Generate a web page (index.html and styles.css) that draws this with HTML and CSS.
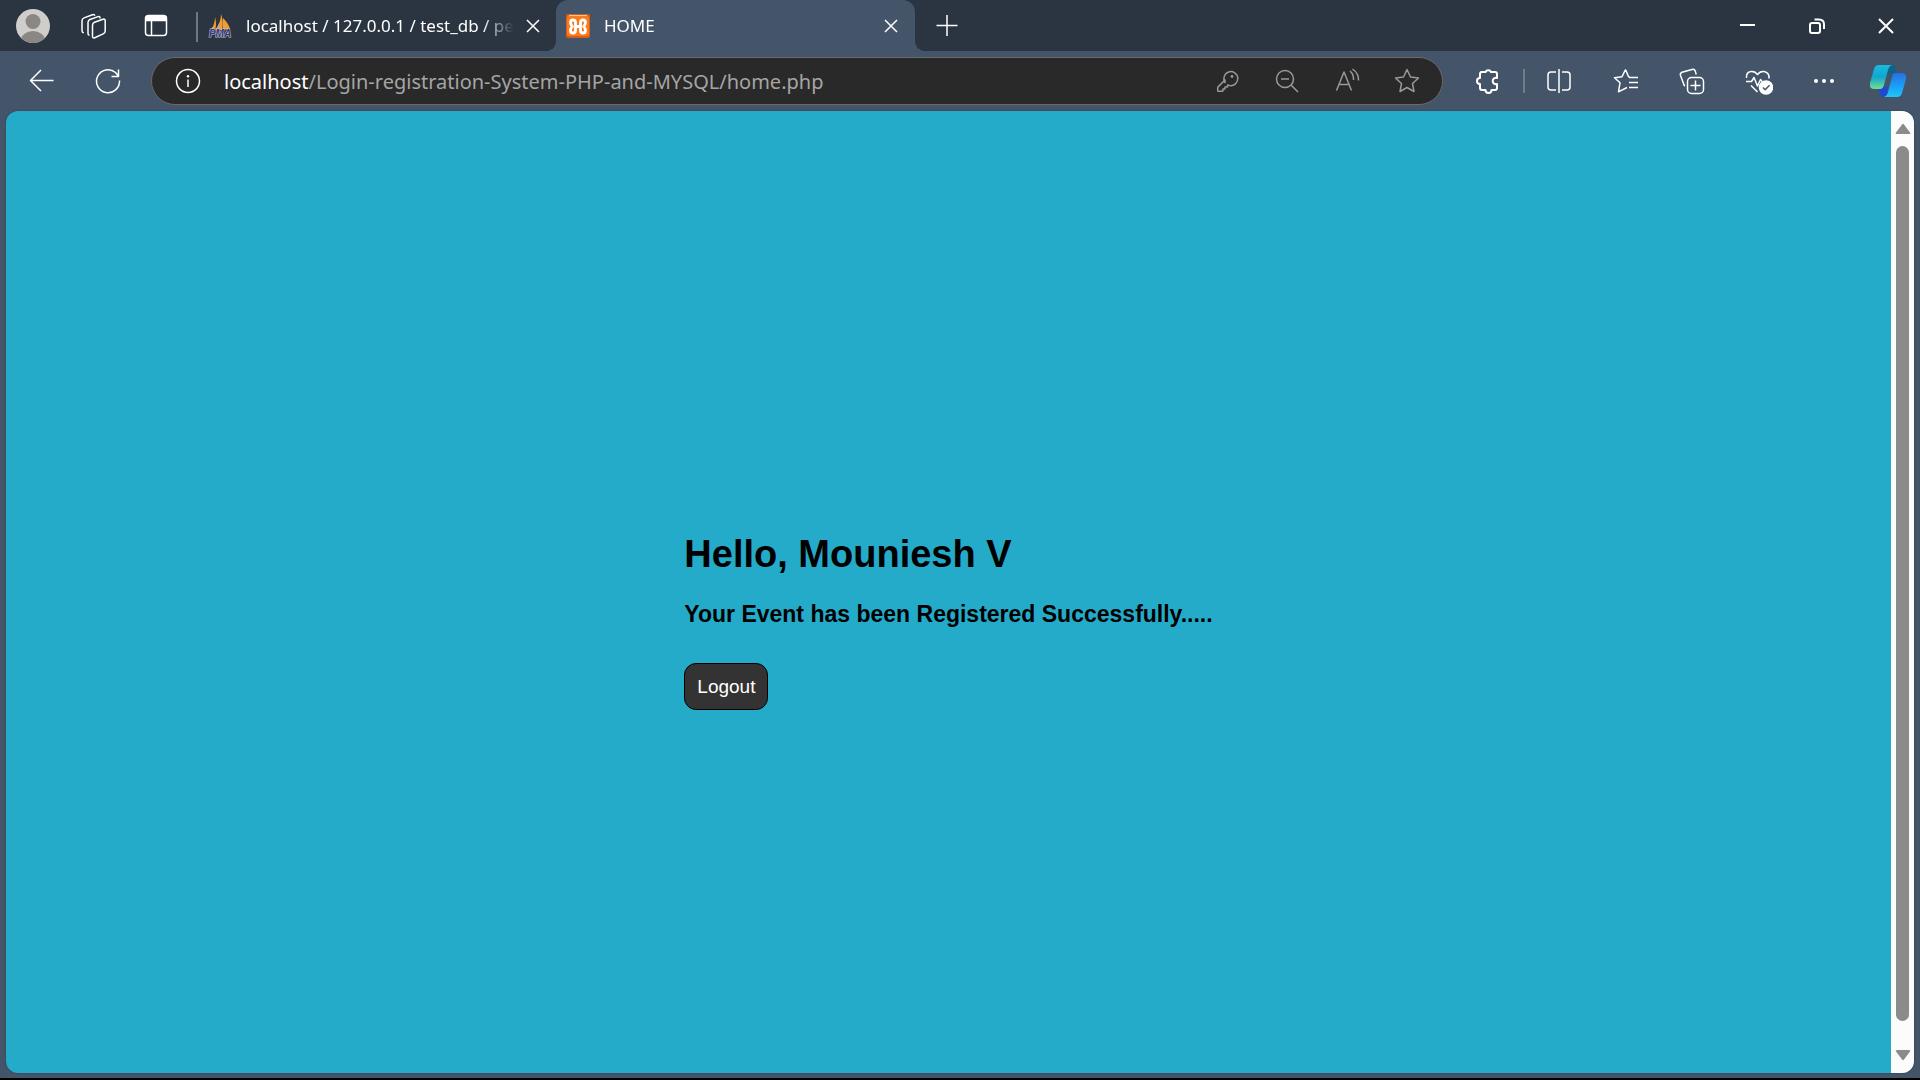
FILE: index.html
```html
<!DOCTYPE html>
<html lang="en">
<head>
<meta charset="utf-8">
<title>HOME</title>
<link rel="stylesheet" href="styles.css">
</head>
<body>
<div class="browser">
  <header class="tabbar">
    <button class="tool profile" aria-label="Profile"><svg class="avatar" viewBox="0 0 34 34"><defs><clipPath id="face"><circle cx="17" cy="17" r="17"/></clipPath></defs><g clip-path="url(#face)"><path fill="#d0cecb" d="M0 0h34v34H0z"/><circle cx="17" cy="12.500" r="7.500" fill="#8a8784"/><ellipse cx="17" cy="31" rx="12" ry="9" fill="#8a8784"/></g></svg></button>
    <button class="tool workspaces" aria-label="Workspaces"><svg class="icon" viewBox="0 0 32 32"><path d="M17.500 12.300 26 9.200q2.200-.6 2.200 1.600V21q0 2-2 2.900l-8.500 3.900q-2.200.7-2.200-1.600V15.200q0-2.100 2-2.900zM23 8.500V8q0-2-2-1.400l-8 2.900q-2 .8-2 2.900v11q0 1.500 1.500 1.800M17.800 5.800Q17.300 4 15.500 4.700L7 7.900q-2 .8-2 2.900v10q0 1.800 1.800 2"/></svg></button>
    <button class="tool tabmenu" aria-label="Tab actions menu"><svg class="icon" viewBox="0 0 32 32"><rect x="5.500" y="5.500" width="21" height="20" rx="3"/><path class="solid" d="M6 10.500V8q0-2 3-2h14q3 0 3 2v2.500z"/><path d="M11.500 11v14"/></svg></button>
    <nav class="tabs">
      <div class="tab">
        <svg class="favicon" viewBox="0 0 24 24"><path fill="#f89b22" d="M2 17Q7 11 7 3q2 7 0 14zM7.500 16Q13 8 13 0q3 8 1 16zM15 16V4q6 6 7 11z"/><path fill="#b5aba2" d="m8 15 4-7-1 8zM1 17l5-5-1 5zM16 15l-1-9 3 9z"/><text class="pma" x="12" y="23" text-anchor="middle">PMA</text></svg>
        <a class="title" href="#">localhost / 127.0.0.1 / test_db / pe</a>
        <button class="close" aria-label="Close tab"><svg class="icon" viewBox="0 0 32 32"><path d="m10 10 12 12M22 10 10 22"/></svg></button>
      </div>
      <div class="tab active">
        <svg class="favicon" viewBox="0 0 24 24"><rect width="24" height="24" rx="2" fill="#d95d13"/><rect x="1" y="2" width="22" height="20" rx="2" fill="#f97b20"/><path stroke="#ffc59a" d="M3 1.500h18"/><path fill="none" stroke="#fff" stroke-width="2.800" stroke-linecap="round" stroke-linejoin="round" d="M9.500 12.500V8.500q0-2.500-2.500-2.500T4.500 8.500q0 2.500 2 4-2 1.500-2 4T7 19t2.500-2.500zh5M14.500 12.500V8.500q0-2.500 2.500-2.500t2.500 2.500q0 2.500-2 4 2 1.500 2 4T17 19t-2.500-2.500z"/></svg>
        <a class="title" href="#">HOME</a>
        <button class="close" aria-label="Close tab"><svg class="icon" viewBox="0 0 32 32"><path d="m10 10 12 12M22 10 10 22"/></svg></button>
      </div>
    </nav>
    <button class="tool newtab" aria-label="New tab"><svg class="icon" viewBox="0 0 32 32"><path d="M16 5v21M5.500 15.500h21"/></svg></button>
    <div class="window">
      <button class="tool" aria-label="Minimize"><svg class="icon bold" viewBox="0 0 32 32"><path d="M8 15h15"/></svg></button>
      <button class="tool" aria-label="Restore"><svg class="icon bold" viewBox="0 0 32 32"><rect x="9" y="13" width="10" height="10" rx="2"/><path d="M13.500 9.500H18q5 0 5 5V19"/></svg></button>
      <button class="tool" aria-label="Close window"><svg class="icon bold" viewBox="0 0 32 32"><path d="m9 9 14 14M23 9 9 23"/></svg></button>
    </div>
  </header>
  <div class="toolbar">
    <button class="tool nav" aria-label="Back"><svg class="icon" viewBox="0 0 32 32"><path d="M27.500 15.500H4.500M15 5 4.500 15.500 15 26"/></svg></button>
    <button class="tool nav" aria-label="Refresh"><svg class="icon" viewBox="0 0 32 32"><path d="M27.500 15.500A11.500 11.500 0 1 1 23.500 7.500L26 10.500M26.500 4.500v7h-7"/></svg></button>
    <div class="address">
      <button class="tool info" aria-label="Site information"><svg class="icon" viewBox="0 0 32 32"><circle cx="16" cy="16" r="11.500"/><path d="M16 14.500V22"/><circle class="dot" cx="16" cy="11.200" r="1.200"/></svg></button>
      <a class="url" href="#"><span class="host">localhost</span>/Login-registration-System-PHP-and-MYSQL/home.php</a>
      <button class="tool" aria-label="Saved passwords"><svg class="icon" viewBox="0 0 32 32"><path d="M14 17.500A7 7 0 1 1 18.500 20.500L16.500 20v2h-2.500v2h-2v1.500q0 .8-1 .8H7.500q-.8 0-.8-.8V23q0-.8.6-1.400L14 15z"/><circle class="dot" cx="21" cy="11.500" r="1.400"/></svg></button>
      <button class="tool" aria-label="Zoom"><svg class="icon" viewBox="0 0 32 32"><circle cx="14" cy="14" r="8.500"/><path d="m20 20 7 7M10 14h8"/></svg></button>
      <button class="tool" aria-label="Read aloud"><svg class="icon" viewBox="0 0 32 32"><path d="M5.500 25.500 13 7l7.500 18.500M8.500 19.500h9M19 6q4 3.500 3.500 9M21.500 4q6.500 4.500 6 11.500"/></svg></button>
      <button class="tool" aria-label="Add to favorites"><svg class="icon" viewBox="0 0 32 32"><path d="m16 4.500 3.500 7.500 8 1-6 5.500L23 26.500l-7-4-7 4 1.500-8-6-5.500 8-1z"/></svg></button>
    </div>
    <button class="tool extensions" aria-label="Extensions"><svg class="icon bold" viewBox="0 0 32 32"><path d="M10 7h4.500a3 3 0 0 1 5.500 0H24q2 0 2 2v4a3.200 3.200 0 1 0 0 6v4q0 2-2 2h-3.500a3 3 0 0 1-6 0H11q-2 0-2-2v-4a3 3 0 0 1 0-6V9q0-2 2-2z"/></svg></button>
    <span class="divider"></span>
    <button class="tool" aria-label="Split screen"><svg class="icon" viewBox="0 0 32 32"><path d="M13 7H8q-3 0-3 3v12q0 3 3 3h5M19 7h5q3 0 3 3v12q0 3-3 3h-5M16 4v24"/></svg></button>
    <button class="tool" aria-label="Favorites"><svg class="icon" viewBox="0 0 32 32"><path d="m21 12-1.500-.3L17 5.500q-.5-1-1 0l-3 6.300-7.500 1 5.500 5-1.500 9L18 22.500M20 12.500h9M20 17.500h9M20 22.500h9"/></svg></button>
    <button class="tool" aria-label="Collections"><svg class="icon" viewBox="0 0 32 32"><rect x="12.500" y="12.500" width="16" height="16" rx="4"/><path d="M20.500 15.500v10M15.500 20.500h10M10 21q-1-.5-1.500-2.500L5.500 10.500q-.7-2.500 1.500-3.300L17 4.500q2.500-.7 3.200 1.500l1 3.500"/></svg></button>
    <button class="tool" aria-label="Browser essentials"><svg class="icon" viewBox="0 0 32 32"><path d="M5.500 13Q5 7 10 6.500q4-.5 6.500 3 2.500-3.500 6.500-3 5.500 1 5 7M5 16.500h5.500l2.500-4 3.500 8.500 3-6.500 1.500 2M10 20.500l6.500 6.500"/><circle class="solid" cx="25" cy="22.500" r="6.500"/><path class="check" d="m22 22.500 2.200 2.200 4.300-4.500"/></svg></button>
    <button class="tool" aria-label="Settings and more"><svg class="icon" viewBox="0 0 32 32"><circle class="dot" cx="9" cy="16" r="2"/><circle class="dot" cx="17" cy="16" r="2"/><circle class="dot" cx="25" cy="16" r="2"/></svg></button>
    <button class="tool copilot" aria-label="Copilot"><svg class="logo" viewBox="0 0 36 32"><defs><linearGradient id="green" x1="0" y1="0" x2="0" y2="1"><stop offset="0" stop-color="#18bce0"/><stop offset=".5" stop-color="#12a4cf"/><stop offset="1" stop-color="#70e08c"/></linearGradient><linearGradient id="blue" x1="0" y1="0" x2="0" y2="1"><stop offset="0" stop-color="#2770dd"/><stop offset=".6" stop-color="#18a4fa"/><stop offset="1" stop-color="#21c6f5"/></linearGradient></defs><path fill="#0b6388" d="M15 0h7q3 0 4 4l1 4h-4q-4 0-5 3z"/><path fill="#1c48dc" d="M8 22h10l-2 10h-2q-3 0-4-4z"/><path fill="url(#green)" d="M9 0h13q-3 1-4 5l-4 15q-1 4-4 4H4q-5 0-4-6L4 4q1-4 5-4z"/><path fill="url(#blue)" d="M25 8h7q5 0 4 6l-4 14q-1 4-5 4H14q3-1 4-5l4-15q1-4 3-4z"/></svg></button>
  </div>
  <div class="viewport">
    <main class="page">
      <section class="message">
        <h1>Hello, Mouniesh V</h1>
        <h3>Your Event has been Registered Successfully.....</h3>
        <button class="logout">Logout</button>
      </section>
    </main>
    <div class="scrollbar">
      <svg class="arrow" viewBox="0 0 16 12"><path d="M7 1.500q1-1.500 2 0l6 8q1 1.500-1 1.500H2q-2 0-1-1.500z"/></svg>
      <div class="thumb"></div>
      <svg class="arrow" viewBox="0 0 16 12"><path d="M7 10.500q1 1.500 2 0l6-8Q16 1 14 1H2Q0 1 1 2.500z"/></svg>
    </div>
  </div>
</div>
</body>
</html>
```
FILE: styles.css
```css
* { box-sizing: border-box; }

body {
  margin: 0;
  background: #000;
  font-family: "Noto Sans", "Open Sans", sans-serif;
}

button {
  margin: 0;
  padding: 0;
  border: 0;
  background: none;
  color: inherit;
  font: inherit;
}

a { color: inherit; text-decoration: none; }

.browser {
  display: flex;
  flex-direction: column;
  min-height: 100vh;
  border-bottom: 2px solid #000;
  background: #445469;
  color: #fff;
}

.icon {
  display: block;
  width: 32px;
  height: 32px;
  fill: none;
  stroke: currentColor;
  stroke-width: 1.5;
  stroke-linejoin: round;
}
.icon.bold { stroke-width: 2; }
.icon .solid { fill: currentColor; }
.icon .dot { fill: currentColor; stroke: none; }
.icon .check { stroke: #445469; }

.tool {
  display: flex;
  flex: none;
  align-items: center;
  justify-content: center;
  width: 66px;
  height: 48px;
}

/* Tab strip */
.tabbar {
  display: flex;
  align-items: center;
  height: 51px;
  background: #2b3541;
}
.profile { padding-top: 1px; }
.avatar { width: 34px; height: 34px; }
.workspaces { width: 54px; }
.tabmenu { width: 72px; }

.tabs { display: flex; align-self: stretch; margin-left: 4px; }
.tab {
  display: flex;
  align-items: center;
  width: 360px;
  padding: 0 7px 0 12px;
  font-size: 17px;
}
.tab:first-child {
  background: linear-gradient(#6f7780, #6f7780) 0 12px / 2px 30px no-repeat;
}
.tab.active {
  position: relative;
  width: 359px;
  padding: 0 8px 0 10px;
  border-radius: 12px 12px 0 0;
  background: #445469;
}
.tab.active::before,
.tab.active::after {
  content: "";
  position: absolute;
  bottom: 0;
  width: 10px;
  height: 10px;
}
.tab.active::before {
  right: 100%;
  background: radial-gradient(circle at 0 0, transparent 10px, #445469 10px);
}
.tab.active::after {
  left: 100%;
  background: radial-gradient(circle at 100% 0, transparent 10px, #445469 10px);
}
.favicon { flex: none; width: 24px; height: 24px; margin-right: 14px; }
.pma {
  font: italic bold 10px "Liberation Sans", sans-serif;
  fill: #37366f;
  stroke: #c5c5df;
  stroke-width: 1px;
  paint-order: stroke;
}
.title {
  flex: 1;
  white-space: nowrap;
  mask-image: linear-gradient(to right, #000 calc(100% - 32px), transparent);
}
.close { margin-left: 3px; }
.newtab { width: 64px; }
.window { display: flex; margin-left: auto; }
.window .tool { width: 69px; }

/* Address bar */
.toolbar {
  display: flex;
  align-items: center;
  height: 60px;
  padding-left: 9px;
}
.address {
  display: flex;
  flex: 1;
  align-items: center;
  min-width: 0;
  height: 48px;
  margin-left: 10px;
  padding-right: 5px;
  border: 1px solid #6a6868;
  border-radius: 24px;
  background: #292929;
  color: #999;
}
.address .tool { width: 60px; }
.address .info { width: 72px; color: #fff; }
.url {
  flex: 1;
  overflow: hidden;
  color: #a5a5a5;
  font-size: 20px;
  white-space: nowrap;
}
.host { color: #fff; }
.extensions { margin-left: 11px; }
.divider {
  width: 2px;
  height: 24px;
  margin: 0 1px 0 3px;
  background: #717d8d;
}
.copilot { width: 64px; }
.logo { width: 36px; height: 32px; }

/* Page area */
.viewport {
  display: flex;
  flex: 1;
  margin: 0 6px 5px;
  overflow: hidden;
  border-radius: 12px;
  background: #25abca;
  box-shadow: 0 0 2px #303c4c;
}
.page {
  display: flex;
  flex: 1;
  align-items: center;
  justify-content: center;
  padding-top: 58px;
  color: #000;
  font-family: "Liberation Sans", Arial, sans-serif;
}
.message h1 { margin: 0 0 25px; font-size: 38px; line-height: 44px; }
.message h3 { margin: 0 0 36px; font-size: 23px; line-height: 26px; }
.logout {
  display: block;
  height: 47px;
  padding: 0 12px;
  border: 1px solid #000;
  border-radius: 12px;
  background: #333;
  color: #fff;
  font-size: 19px;
}

.scrollbar {
  display: flex;
  flex-direction: column;
  align-items: center;
  justify-content: space-between;
  width: 23px;
  padding: 12px 0;
  background: #fcfcfc;
}
.arrow { width: 16px; height: 12px; fill: #8b8b8b; }
.thumb {
  flex: 1;
  width: 13px;
  margin: 11px 0 28px;
  border-radius: 7px;
  background: #8b8b8b;
}
```
